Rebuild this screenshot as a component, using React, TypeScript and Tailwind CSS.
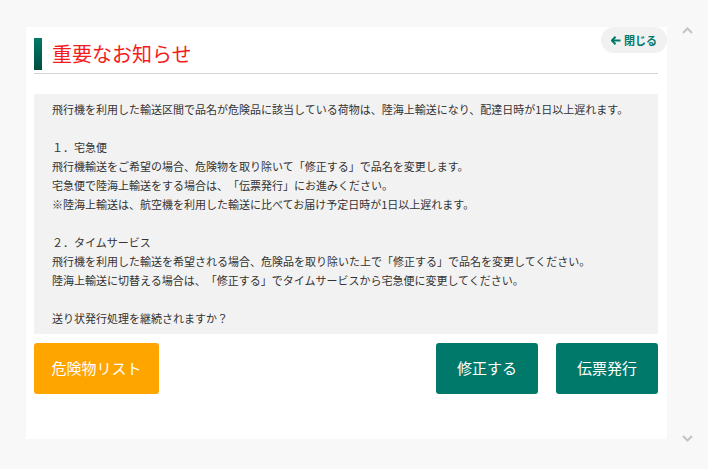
import React from "react";

const lines = [
  "飛行機を利用した輸送区間で品名が危険品に該当している荷物は、陸海上輸送になり、配達日時が1日以上遅れます。",
  "",
  "１．宅急便",
  "飛行機輸送をご希望の場合、危険物を取り除いて「修正する」で品名を変更します。",
  "宅急便で陸海上輸送をする場合は、「伝票発行」にお進みください。",
  "※陸海上輸送は、航空機を利用した輸送に比べてお届け予定日時が1日以上遅れます。",
  "",
  "２．タイムサービス",
  "飛行機を利用した輸送を希望される場合、危険品を取り除いた上で「修正する」で品名を変更してください。",
  "陸海上輸送に切替える場合は、「修正する」でタイムサービスから宅急便に変更してください。",
  "",
  "送り状発行処理を継続されますか？",
];

export default function App() {
  return (
    <div
      className="w-[708px] h-[469px] bg-[#f8f8f8] flex overflow-hidden [text-spacing-trim:space-all]"
      style={{ fontFamily: '"Noto Sans CJK JP", "Noto Sans", sans-serif' }}
    >
      <div className="ml-[26px] mt-[27px] w-[641px] h-[412px] bg-white relative pl-[8px] pr-[9px] pt-[11px] flex flex-col">
        <button className="absolute top-0 right-0 h-[26px] w-[66px] rounded-full bg-[#f1f1f1] flex items-center justify-center gap-[3px] text-[#00796b] text-[11px] font-bold">
          <svg width="10" height="9" viewBox="0 0 10 9" fill="none">
            <path d="M4.5 0.8 L1 4.5 L4.5 8.2" stroke="#00796b" strokeWidth="2" strokeLinejoin="miter" />
            <path d="M1.5 4.5 H9.5" stroke="#00796b" strokeWidth="2" />
          </svg>
          <span>閉じる</span>
        </button>
        <div className="flex items-center h-[32px]">
          <div className="w-[8px] h-[32px] bg-gradient-to-b from-[#007a65] to-[#004d3f]" />
          <h1 className="ml-[10px] text-[20px] leading-none text-[#f51c1c]">重要なお知らせ</h1>
        </div>
        <div className="mt-[3px] h-px bg-[#d4d4d4]" />
        <div className="mt-[20px] bg-[#f2f2f2] pl-[18px] pr-2 py-[6px] text-[11px] text-[#333333]">
          {lines.map((l, i) => (
            <div key={i} className="h-[19px] leading-[19px] whitespace-nowrap">
              {l}
            </div>
          ))}
        </div>
        <div className="mt-[9px] flex items-start">
          <button className="w-[125px] h-[51px] rounded-[3px] bg-[#ffa500] text-white text-[15px]">
            危険物リスト
          </button>
          <div className="flex-1" />
          <button className="w-[102px] h-[51px] rounded-[3px] bg-[#00796b] text-white text-[15px]">
            修正する
          </button>
          <button className="ml-[18px] w-[102px] h-[51px] rounded-[3px] bg-[#00796b] text-white text-[15px]">
            伝票発行
          </button>
        </div>
      </div>
      <div className="flex-1 flex flex-col items-center justify-between pt-[27px] pb-[27px]">
        <svg width="11" height="7" viewBox="0 0 11 7" fill="none">
          <path d="M1 6 L5.5 1.5 L10 6" stroke="#c4c4c4" strokeWidth="2" />
        </svg>
        <svg width="11" height="7" viewBox="0 0 11 7" fill="none">
          <path d="M1 1 L5.5 5.5 L10 1" stroke="#c4c4c4" strokeWidth="2" />
        </svg>
      </div>
    </div>
  );
}
